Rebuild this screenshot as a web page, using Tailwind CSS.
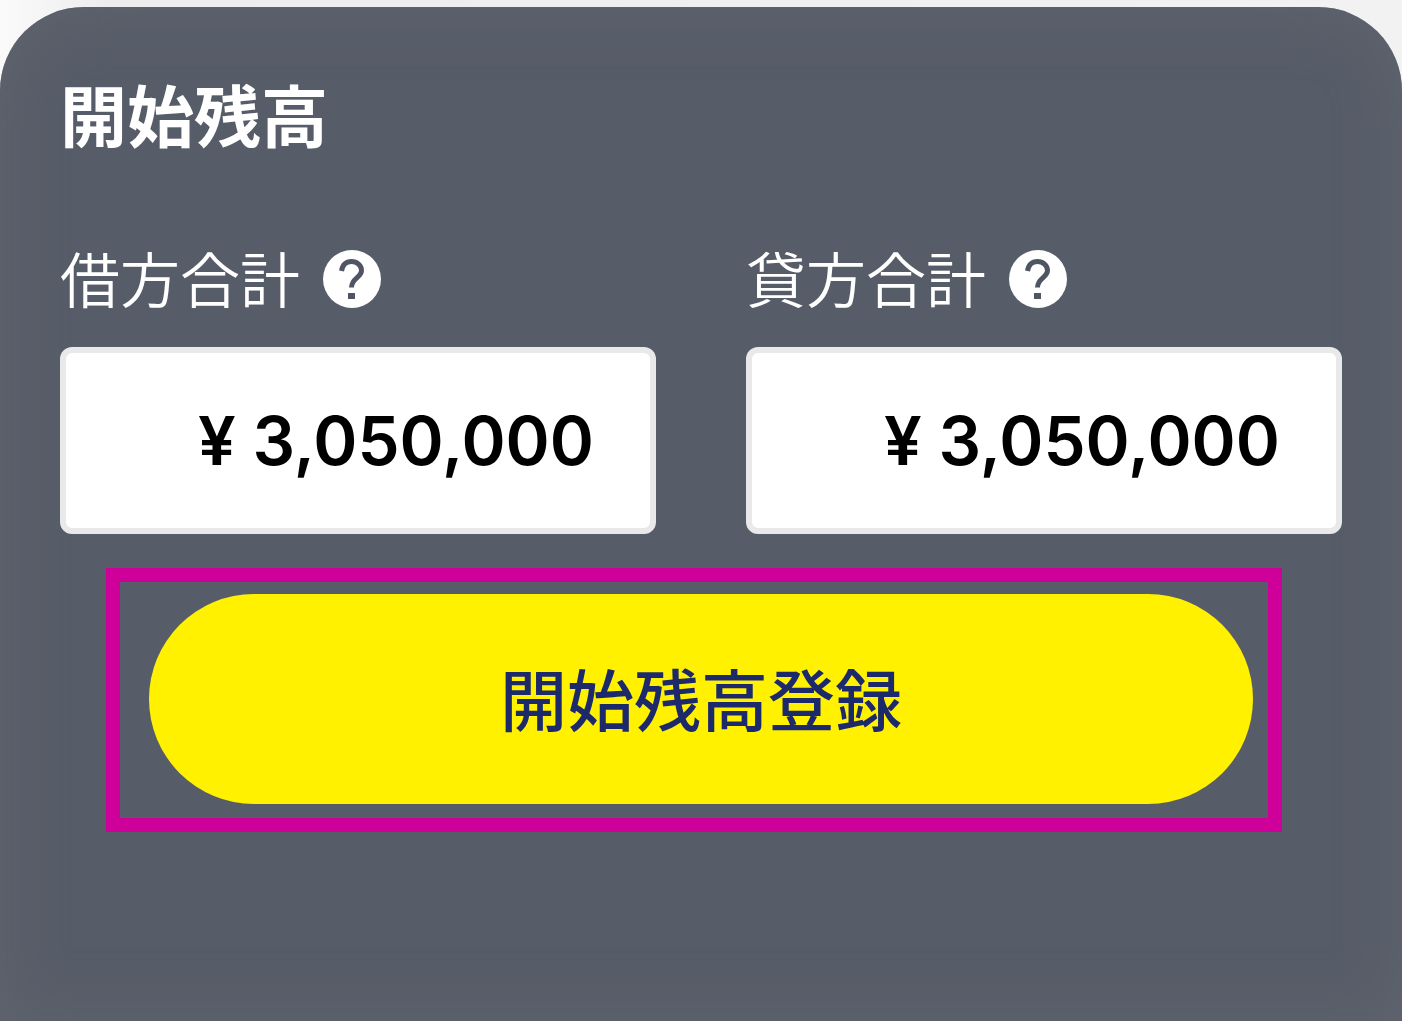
<!DOCTYPE html>
<html lang="ja">
<head>
  <meta charset="UTF-8">
  <meta name="viewport" content="width=device-width, initial-scale=1">
  <title>開始残高</title>
  <script src="https://cdn.jsdelivr.net/npm/@tailwindcss/browser@4"></script>
</head>
<body class="bg-white min-h-screen flex flex-col pr-[5px] pb-[5px] font-['Noto_Sans_CJK_JP',sans-serif]">
  <div class="grow flex flex-col bg-linear-to-r from-[#fafafa] via-[#ededed] via-8% to-[#f2f2f2] pt-[7px]">
    <main class="grow bg-[#575d68] rounded-t-[84px] px-[60px] pt-16 inset-shadow-[0_0_60px_#60656f]">
      <h1 class="text-[67px] leading-[84px] font-bold text-white">開始残高</h1>

      <div class="mt-[82px] grid grid-cols-2 gap-[90px]">
        <div>
          <div class="flex items-center gap-[22px]">
            <label for="debit" class="text-[60px] leading-[80px] font-[350] text-white">借方合計</label>
            <button type="button" aria-label="借方合計のヘルプ" class="mt-1">
              <svg class="size-[60px]" viewBox="0 0 60 60" fill="none">
                <circle cx="30" cy="30" r="29" fill="white"/>
                <path d="M19.500 22C20.500 16 24 12.500 29.500 12.500C35 12.500 39.500 16.500 39.500 21.500C39.500 28.500 29.500 29 29.500 38.500" stroke="#4f5562" stroke-width="5"/>
                <rect x="26" y="44" width="7" height="6" fill="#4f5562"/>
              </svg>
            </button>
          </div>
          <input id="debit" type="text" value="¥ 3,050,000" class="mt-[30px] w-full h-[187px] rounded-xl border-6 border-[#e9e9e9] bg-white px-14 text-right text-[67px] font-semibold text-black font-['Inter',sans-serif]">
        </div>
        <div>
          <div class="flex items-center gap-[22px]">
            <label for="credit" class="text-[60px] leading-[80px] font-[350] text-white">貸方合計</label>
            <button type="button" aria-label="貸方合計のヘルプ" class="mt-1">
              <svg class="size-[60px]" viewBox="0 0 60 60" fill="none">
                <circle cx="30" cy="30" r="29" fill="white"/>
                <path d="M19.500 22C20.500 16 24 12.500 29.500 12.500C35 12.500 39.500 16.500 39.500 21.500C39.500 28.500 29.500 29 29.500 38.500" stroke="#4f5562" stroke-width="5"/>
                <rect x="26" y="44" width="7" height="6" fill="#4f5562"/>
              </svg>
            </button>
          </div>
          <input id="credit" type="text" value="¥ 3,050,000" class="mt-[30px] w-full h-[187px] rounded-xl border-6 border-[#e9e9e9] bg-white px-14 text-right text-[67px] font-semibold text-black font-['Inter',sans-serif]">
        </div>
      </div>

      <div class="mt-[34px] ml-[46px] mr-[60px] border-14 border-[#cf0099] pt-3 pb-[14px] pl-[29px] pr-[15px]">
        <button type="button" class="w-full h-[210px] pb-1 rounded-full bg-[#fff100] text-[67px] font-medium text-[#1c2a6b]">開始残高登録</button>
      </div>
    </main>
  </div>
</body>
</html>
